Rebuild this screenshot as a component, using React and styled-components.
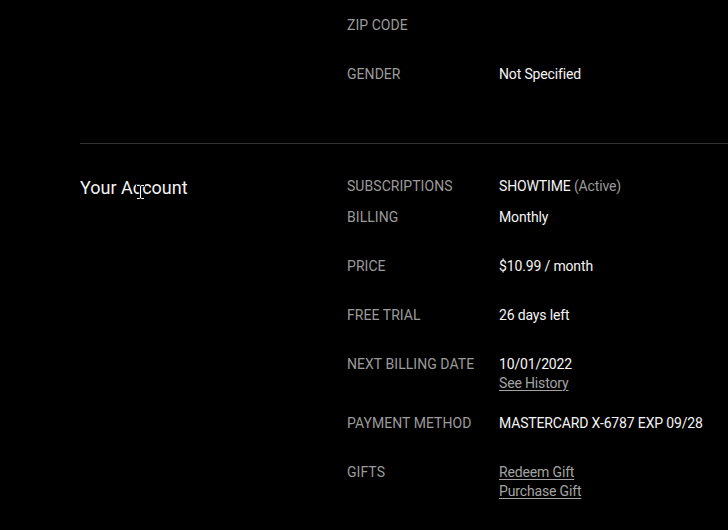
import React from "react";
import styled, { createGlobalStyle } from "styled-components";

const Global = createGlobalStyle`
  html, body { margin: 0; padding: 0; background: #000; }
  body { font-family: Roboto, "Liberation Sans", sans-serif; -webkit-font-smoothing: antialiased; }
`;

const Page = styled.div`
  width: 728px;
  height: 530px;
  overflow: hidden;
  background: #000;
  padding-left: 80px;
  box-sizing: border-box;
`;

const Section = styled.section`
  display: grid;
  grid-template-columns: 267px 1fr;
  padding-top: ${(p) => p.$top}px;
  padding-bottom: ${(p) => p.$bottom}px;
  border-top: ${(p) => (p.$divider ? "1px solid #343434" : "none")};
`;

const Heading = styled.h2`
  margin: 0;
  font-size: 18px;
  line-height: 22px;
  font-weight: 400;
  color: #f2f2f2;
  position: relative;
  align-self: start;
`;

const Rows = styled.div`
  display: flex;
  flex-direction: column;
`;

const Row = styled.div`
  display: grid;
  grid-template-columns: 152px 1fr;
  min-height: ${(p) => p.$min ?? 28}px;
  margin-bottom: ${(p) => p.$gap ?? 21}px;
  &:last-child { margin-bottom: 0; }
`;

const Label = styled.div`
  font-size: 14px;
  line-height: 19px;
  color: #9b9b9b;
  letter-spacing: 0.05px;
`;

const Value = styled.div`
  display: flex;
  flex-direction: column;
  font-size: 14px;
  line-height: 19px;
  color: #f4f4f4;
  letter-spacing: -0.15px;
`;

const Muted = styled.span`
  color: #9b9b9b;
`;

const Link = styled.a`
  color: #a3a3a3;
  text-decoration: underline;
  text-underline-offset: 2px;
  text-decoration-thickness: 1px;
  cursor: pointer;
`;

const Cursor = styled.svg`
  position: absolute;
  left: 56px;
  top: 7px;
`;

const beam =
  "M1 1.5h2.2c.7 0 1.3.5 1.3 1.2 0-.7.6-1.2 1.3-1.2H8M4.5 2.7v10.6M1 14.5h2.2c.7 0 1.3-.5 1.3-1.2 0 .7.6 1.2 1.3 1.2H8";

export default function App() {
  return (
    <>
      <Global />
      <Page>
        <Section $top={16} $bottom={50}>
          <div />
          <Rows>
            <Row>
              <Label>ZIP CODE</Label>
              <Value />
            </Row>
            <Row>
              <Label>GENDER</Label>
              <Value>Not Specified</Value>
            </Row>
          </Rows>
        </Section>
        <Section $divider $top={33} $bottom={30}>
          <Heading>
            Your Account
            <Cursor width="9" height="16" viewBox="0 0 9 16">
              <path d={beam} fill="none" stroke="#000" strokeWidth="2.6" strokeLinecap="round" />
              <path d={beam} fill="none" stroke="#fff" strokeWidth="1" />
            </Cursor>
          </Heading>
          <Rows>
            <Row $min={19} $gap={12}>
              <Label>SUBSCRIPTIONS</Label>
              <Value>
                <span>
                  SHOWTIME <Muted>(Active)</Muted>
                </span>
              </Value>
            </Row>
            <Row>
              <Label>BILLING</Label>
              <Value>Monthly</Value>
            </Row>
            <Row>
              <Label>PRICE</Label>
              <Value>$10.99 / month</Value>
            </Row>
            <Row>
              <Label>FREE TRIAL</Label>
              <Value>26 days left</Value>
            </Row>
            <Row>
              <Label>NEXT BILLING DATE</Label>
              <Value>
                <span>10/01/2022</span>
                <span>
                  <Link>See History</Link>
                </span>
              </Value>
            </Row>
            <Row>
              <Label>PAYMENT METHOD</Label>
              <Value>MASTERCARD X-6787 EXP 09/28</Value>
            </Row>
            <Row>
              <Label>GIFTS</Label>
              <Value>
                <span>
                  <Link>Redeem Gift</Link>
                </span>
                <span>
                  <Link>Purchase Gift</Link>
                </span>
              </Value>
            </Row>
          </Rows>
        </Section>
      </Page>
    </>
  );
}
